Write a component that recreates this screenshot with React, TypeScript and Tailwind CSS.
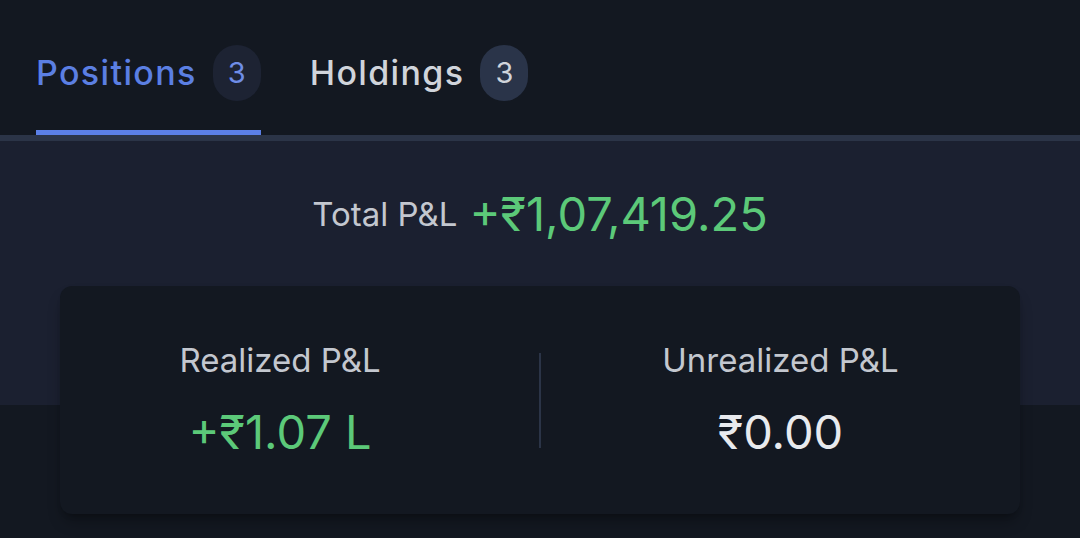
import React from "react"

const font = { fontFamily: "Inter, 'Noto Sans', 'DejaVu Sans', sans-serif" }

function Tab({ label, count, active }: { label: string; count: number; active?: boolean }) {
    return (
        <div className="flex flex-col">
            <div className="flex items-center gap-4 pt-[45px] pb-[29px]">
                <span
                    className={`text-[34px] leading-[40px] font-medium tracking-[0.04em] ${
                        active ? "text-[#5b7fe3]" : "text-[#d0d4db]"
                    }`}
                >
                    {label}
                </span>
                <span
                    className={`flex h-[56px] w-[48px] items-center justify-center rounded-full text-[29px] ${
                        active ? "bg-[#1d2333] text-[#6f8de6]" : "bg-[#2a3449] text-[#d0d4db]"
                    }`}
                >
                    {count}
                </span>
            </div>
            <div className={`h-[5px] ${active ? "bg-[#5b7fe6]" : "bg-transparent"}`} />
        </div>
    )
}

function Stat({ label, value, tone }: { label: string; value: string; tone: "green" | "white" }) {
    return (
        <div className="flex flex-col items-center gap-6">
            <span className="text-[33px] leading-[40px] text-[#c3c7cf]">{label}</span>
            <span className={`text-[47px] leading-[56px] ${tone === "green" ? "text-[#5cc979]" : "text-[#e8eaee]"}`}>
                {value}
            </span>
        </div>
    )
}

export default function App() {
    return (
        <div className="min-h-screen w-full bg-[#131821]" style={font}>
            {/* tabs */}
            <div className="flex gap-[49px] border-b-[6px] border-[#2b3447] pl-9">
                <Tab label="Positions" count={3} active />
                <Tab label="Holdings" count={3} />
            </div>

            {/* summary band */}
            <div className="flex flex-col items-center bg-[#1b2030] px-[60px] pt-[45px]">
                <div className="flex items-center gap-3">
                    <span className="text-[33px] leading-[40px] text-[#c3c7cf]">Total P&amp;L</span>
                    <span className="text-[47px] leading-[56px] text-[#5cc979]">+₹1,07,419.25</span>
                </div>

                <div className="mt-[44px] mb-[-109px] flex h-[228px] w-full items-center rounded-xl bg-[#131821] shadow-lg shadow-black/30">
                    <div className="flex w-[440px] justify-center">
                        <Stat label="Realized P&L" value="+₹1.07 L" tone="green" />
                    </div>
                    <div className="ml-[39px] h-[95px] w-[2px] bg-[#2b3447]" />
                    <div className="flex flex-1 justify-center">
                        <Stat label="Unrealized P&L" value="₹0.00" tone="white" />
                    </div>
                </div>
            </div>
        </div>
    )
}
